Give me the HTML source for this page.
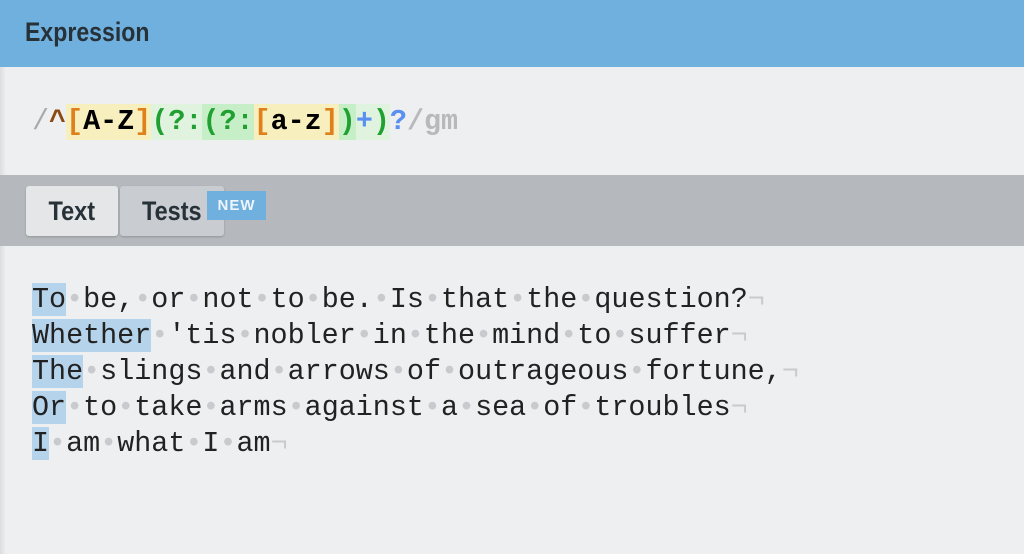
<!DOCTYPE html>
<html><head><style>
body{margin:0;width:1024px;height:554px;background:#eeeff1;overflow:hidden;position:relative;font-family:"Liberation Sans",sans-serif}
.hdr{position:absolute;left:0;top:0;width:1024px;height:67px;background:#70b0de}
.hdr span{position:absolute;left:25px;top:17px;font-size:27px;font-weight:bold;color:#263238;transform:scaleX(0.855);transform-origin:left}
.edge{position:absolute;left:0;top:67px;width:6px;height:487px;background:linear-gradient(90deg,#dcdde0,#eeeff1)}
.re{position:absolute;left:32px;top:104px;height:36px;font-family:"Liberation Mono",monospace;font-weight:bold;font-size:28.4px;line-height:36px;white-space:pre;letter-spacing:0}
.re span{display:inline-block;height:36px}
.y{background:#f7efbd}.g1{background:#dff3df}.g2{background:#c6efc8}
.bar{position:absolute;left:0;top:175px;width:1024px;height:71px;background:#b5b9bd}
.tab{position:absolute;top:186px;height:50px;border-radius:3px;font-weight:bold;font-size:27px;color:#263238;line-height:50px;box-shadow:0 1px 2px rgba(0,0,0,.2)}
.tab b{display:inline-block;transform:scaleX(0.87)}
.badge{position:absolute;left:207px;top:191px;width:59px;height:29px;background:#70b0de;color:#eef4fa;font-weight:bold;font-size:15px;line-height:29px;text-align:center;letter-spacing:1px}
.txt{position:absolute;left:32px;top:282px;font-family:"Liberation Mono",monospace;font-size:28.4px;line-height:36px;white-space:pre;color:#222}
.d{color:#c8cacd}
.h{background:#b5d4ec}
</style></head><body>
<div class="hdr"><span>Expression</span></div>
<div class="edge"></div>
<div class="re"><span style="color:#aaa;font-weight:normal">/</span><span style="color:#8a4a10">^</span><span class="y"><span style="color:#e0801a">[</span>A-Z<span style="color:#e0801a">]</span></span><span class="g1" style="color:#20a030">(?:</span><span class="g2" style="color:#20a030">(?:</span><span class="y"><span style="color:#e0801a">[</span>a-z<span style="color:#e0801a">]</span></span><span class="g2" style="color:#20a030">)</span><span class="g1"><span style="color:#5a90f0">+</span><span style="color:#20a030">)</span></span><span style="color:#5a90f0">?</span><span style="color:#b8b9bb">/gm</span></div>
<div class="bar"></div>
<div class="tab" style="left:26px;width:92px;background:#e5e6e8;text-align:center"><b>Text</b></div>
<div class="tab" style="left:120px;width:104px;background:#c9ccd0;padding-left:22px;box-sizing:border-box"><b style="transform-origin:left">Tests</b></div>
<div class="badge">NEW</div>
<div class="txt"><span class="h">To</span><span class="d">•</span>be,<span class="d">•</span>or<span class="d">•</span>not<span class="d">•</span>to<span class="d">•</span>be.<span class="d">•</span>Is<span class="d">•</span>that<span class="d">•</span>the<span class="d">•</span>question?<span class="d">¬</span>
<span class="h">Whether</span><span class="d">•</span>'tis<span class="d">•</span>nobler<span class="d">•</span>in<span class="d">•</span>the<span class="d">•</span>mind<span class="d">•</span>to<span class="d">•</span>suffer<span class="d">¬</span>
<span class="h">The</span><span class="d">•</span>slings<span class="d">•</span>and<span class="d">•</span>arrows<span class="d">•</span>of<span class="d">•</span>outrageous<span class="d">•</span>fortune,<span class="d">¬</span>
<span class="h">Or</span><span class="d">•</span>to<span class="d">•</span>take<span class="d">•</span>arms<span class="d">•</span>against<span class="d">•</span>a<span class="d">•</span>sea<span class="d">•</span>of<span class="d">•</span>troubles<span class="d">¬</span>
<span class="h">I</span><span class="d">•</span>am<span class="d">•</span>what<span class="d">•</span>I<span class="d">•</span>am<span class="d">¬</span></div>
</body></html>
